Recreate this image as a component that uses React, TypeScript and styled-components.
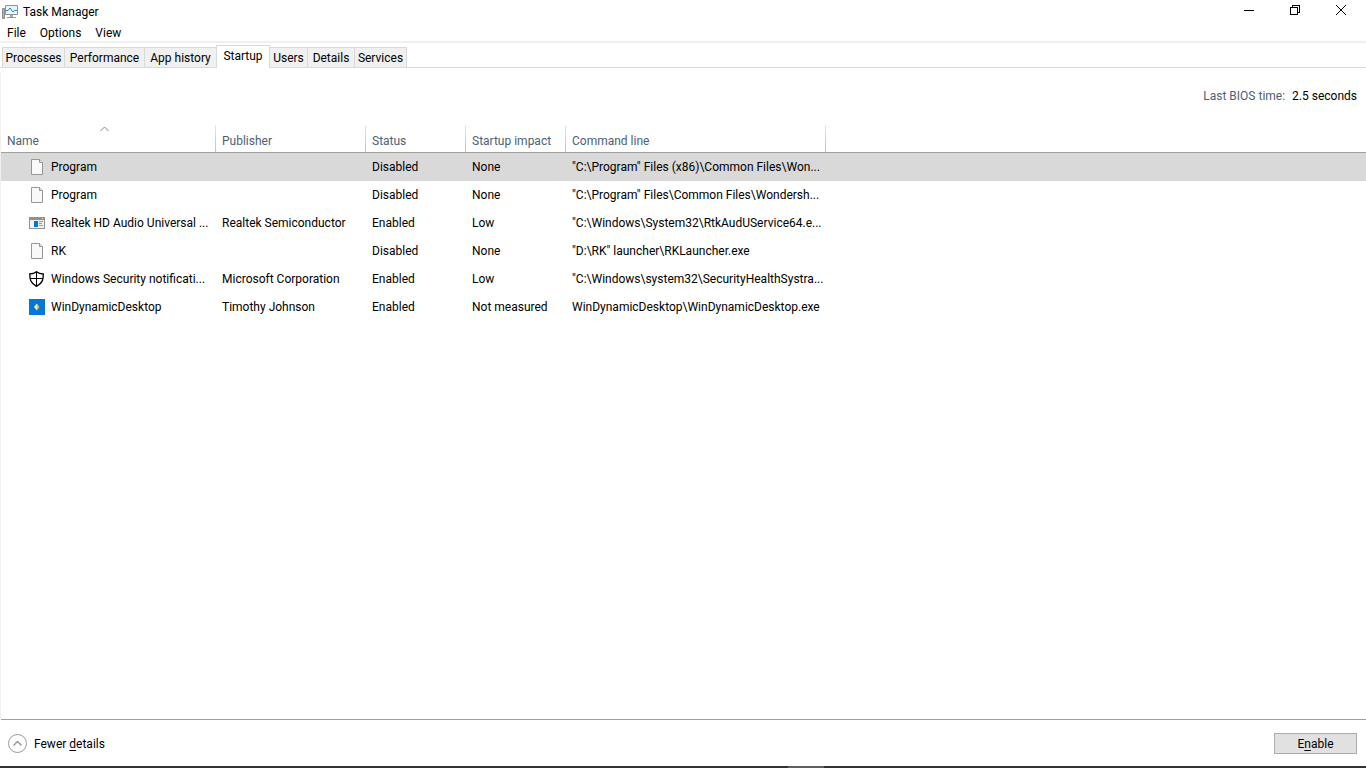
import React from 'react';
import styled, { createGlobalStyle, css } from 'styled-components';

const GlobalStyle = createGlobalStyle`
  *, *::before, *::after { box-sizing: border-box; }
  body {
    margin: 0;
    background: #fff;
    color: #000;
    font: 12px/16px "Segoe UI", Roboto, "Open Sans", sans-serif;
  }
  button { font: inherit; color: inherit; }
  svg { flex: none; }
`;

const Window = styled.div`
  display: flex;
  flex-direction: column;
  min-height: 100vh;
`;

const TitleBar = styled.header`
  display: flex;
  align-items: center;
  height: 24px;
  padding: 0 2px;
`;

const Title = styled.h1`
  flex: 1;
  margin: 0 0 0 5px;
  font-size: 12px;
  font-weight: 400;
`;

const CaptionButton = styled.button`
  display: flex;
  justify-content: center;
  width: 46px;
  height: 22px;
  padding: 4px 0 0;
  border: 0;
  background: none;
`;

const MenuBar = styled.nav`
  display: flex;
  height: 19px;
  gap: 14px;
  padding: 1px 7px;
  border-bottom: 2px solid #f0f0f0;
`;

const MenuItem = styled.button`
  padding: 0;
  border: 0;
  background: none;
`;

const TabBar = styled.div`
  display: flex;
  align-items: flex-end;
  height: 25px;
  padding-left: 2px;
  box-shadow: inset 0 -1px #d9d9d9;
`;

const Tab = styled.button<{ $width: number; $active?: boolean; $first?: boolean; $open?: boolean }>`
  width: ${(p) => p.$width}px;
  height: 21px;
  padding: 0;
  border: solid #d9d9d9;
  border-width: 1px ${(p) => (p.$open ? 0 : 1)}px 1px ${(p) => (p.$first ? 1 : 0)}px;
  background: #f0f0f0;
  white-space: nowrap;
  ${(p) =>
    p.$active &&
    css`
      height: 23px;
      padding-bottom: 2px;
      border-width: 1px 1px 0;
      background: #fff;
    `}
`;

const Panel = styled.main`
  display: flex;
  flex: 1;
  flex-direction: column;
  margin-top: 4px;
  border-left: 1px solid #f0f0f0;
`;

const BiosTime = styled.p`
  display: flex;
  justify-content: flex-end;
  gap: 7px;
  margin: 0;
  padding: 16px 9px 21px;
`;

const BiosLabel = styled.span`
  color: #4c607a;
`;

const StartupTable = styled.table`
  width: 100%;
  border-collapse: separate;
  border-spacing: 0;
  table-layout: fixed;
`;

const Column = styled.col<{ $width?: number }>`
  width: ${(p) => (p.$width ? `${p.$width}px` : 'auto')};
`;

const HeaderCell = styled.th<{ $last?: boolean }>`
  height: 28px;
  padding: 5px 0 0;
  border-bottom: 1px solid #a0a0a0;
  background: ${(p) =>
    p.$last ? 'none' : 'linear-gradient(#e6e6e6, #c0c0c0) right / 1px 100% no-repeat'};
  color: #4c607a;
  font-weight: 400;
  text-align: left;
`;

const SortButton = styled.button`
  position: relative;
  width: 100%;
  padding: 0 6px;
  border: 0;
  background: none;
  text-align: left;
`;

const SortArrow = styled.svg`
  position: absolute;
  top: -7px;
  left: 98px;
`;

const Row = styled.tr<{ $selected?: boolean }>`
  background: ${(p) => (p.$selected ? '#d9d9d9' : 'none')};
`;

const Cell = styled.td`
  height: 28px;
  padding: 0 0 0 6px;
  white-space: nowrap;
`;

const NameContent = styled.div`
  display: flex;
  align-items: center;
  gap: 6px;
  padding-left: 22px;
`;

const Footer = styled.footer`
  display: flex;
  align-items: center;
  justify-content: space-between;
  height: 47px;
  margin-left: 1px;
  padding: 1px 9px 0 6px;
  border-top: 1px solid #a0a0a0;
`;

const DetailsButton = styled.button`
  display: flex;
  align-items: center;
  gap: 7px;
  padding: 0;
  border: 0;
  background: none;
`;

const EnableButton = styled.button`
  width: 83px;
  height: 21px;
  padding: 0;
  border: 1px solid #adadad;
  background: #e1e1e1;
`;

const AccessKey = styled.span`
  text-decoration: underline;
  text-underline-offset: 2px;
`;

const Taskbar = styled.div`
  height: 2px;
  background: linear-gradient(#606060, #606060) 788px 0 / 36px 2px no-repeat #343234;
`;

const AppIcon = () => (
  <svg width="16" height="16" viewBox="0 0 16 16">
    <path d="M.5 4.500h2v10h-2z" fill="#b5b5b5" stroke="#8c8c8c" />
    <path d="M3.500 1.500h12v9h-12z" fill="#e9f6fb" stroke="#8d9297" />
    <path d="M4 6.500h2l2-2.500 3 4 1.500-1.500H15" fill="none" stroke="#2187b8" />
    <path d="M8 11h3v2H8z" fill="#aaa" />
    <path d="M5 13.500h9" stroke="#999" />
  </svg>
);

const FileIcon = () => (
  <svg width="16" height="16" viewBox="0 0 16 16">
    <path d="M2.500.5h8l3 3v12h-11z" fill="#f8f9fa" stroke="#969696" />
    <path d="M10.500.5v3h3" fill="#e8e8e8" stroke="#969696" />
  </svg>
);

const ProgramIcon = () => (
  <svg width="16" height="16" viewBox="0 0 16 16" shapeRendering="crispEdges">
    <path d="M0 2h16v12H0z" fill="#8c9297" />
    <path d="M1 5h14v8H1z" fill="#f2f2f2" />
    <path d="M5 6h4v6H5z" fill="#0078d7" />
    <path d="M10 6h4v1h-4zM10 8h3v1h-3zM10 10h4v1h-4z" fill="#9a9a9a" />
    <path d="M13 3h1v1h-1z" fill="#d5d5d5" />
  </svg>
);

const ShieldIcon = () => (
  <svg width="16" height="16" viewBox="0 0 16 16" fill="none" stroke="#000">
    <path d="M7.500.7C6 2 3.500 3 .8 3c0 5.200.3 9 6.700 12.300C13.900 12 14.300 8.200 14.300 3 11.500 3 9 2 7.500.7z" strokeWidth="1.300" />
    <path d="M7.500 1v14M1 7.500h13" />
  </svg>
);

const DesktopIcon = () => (
  <svg width="16" height="16" viewBox="0 0 16 16">
    <path d="M0 0h16v16H0z" fill="#0078d7" />
    <path d="M8 4.500v7L5 8z" fill="#fff0a0" />
    <path d="M8 4.500v7L10.500 8z" fill="#d9bd62" />
  </svg>
);

type IconKind = 'file' | 'program' | 'shield' | 'desktop';

const icons: Record<IconKind, React.FC> = {
  file: FileIcon,
  program: ProgramIcon,
  shield: ShieldIcon,
  desktop: DesktopIcon,
};

const columns = [
  { label: 'Name', width: 215 },
  { label: 'Publisher', width: 150 },
  { label: 'Status', width: 100 },
  { label: 'Startup impact', width: 100 },
  { label: 'Command line', width: 260 },
];

const apps: { icon: IconKind; name: string; values: string[] }[] = [
  { icon: 'file', name: 'Program', values: ['', 'Disabled', 'None', '"C:\\Program" Files (x86)\\Common Files\\Won...'] },
  { icon: 'file', name: 'Program', values: ['', 'Disabled', 'None', '"C:\\Program" Files\\Common Files\\Wondersh...'] },
  { icon: 'program', name: 'Realtek HD Audio Universal ...', values: ['Realtek Semiconductor', 'Enabled', 'Low', '"C:\\Windows\\System32\\RtkAudUService64.e...'] },
  { icon: 'file', name: 'RK', values: ['', 'Disabled', 'None', '"D:\\RK" launcher\\RKLauncher.exe'] },
  { icon: 'shield', name: 'Windows Security notificati...', values: ['Microsoft Corporation', 'Enabled', 'Low', '"C:\\Windows\\system32\\SecurityHealthSystra...'] },
  { icon: 'desktop', name: 'WinDynamicDesktop', values: ['Timothy Johnson', 'Enabled', 'Not measured', 'WinDynamicDesktop\\WinDynamicDesktop.exe'] },
];

export default function App() {
  return (
    <Window>
      <GlobalStyle />
      <TitleBar>
        <AppIcon />
        <Title>Task Manager</Title>
        <CaptionButton aria-label="Minimize">
          <svg width="10" height="10" stroke="#000" shapeRendering="crispEdges"><path d="M0 5.500h10" /></svg>
        </CaptionButton>
        <CaptionButton aria-label="Restore">
          <svg width="10" height="10" fill="none" stroke="#000" shapeRendering="crispEdges">
            <path d="M.5 2.500h7v7h-7zM2.500 2.500v-2h7v7h-2" />
          </svg>
        </CaptionButton>
        <CaptionButton aria-label="Close">
          <svg width="10" height="10" stroke="#000"><path d="M0 0l10 10M10 0L0 10" /></svg>
        </CaptionButton>
      </TitleBar>
      <MenuBar aria-label="Menu">
        <MenuItem>File</MenuItem>
        <MenuItem>Options</MenuItem>
        <MenuItem>View</MenuItem>
      </MenuBar>
      <TabBar role="tablist">
        <Tab role="tab" $width={63} $first>Processes</Tab>
        <Tab role="tab" $width={80}>Performance</Tab>
        <Tab role="tab" $width={71} $open>App history</Tab>
        <Tab role="tab" $width={54} $active aria-selected>Startup</Tab>
        <Tab role="tab" $width={38}>Users</Tab>
        <Tab role="tab" $width={47}>Details</Tab>
        <Tab role="tab" $width={52}>Services</Tab>
      </TabBar>
      <Panel>
        <BiosTime>
          <BiosLabel>Last BIOS time:</BiosLabel>
          <span>2.5 seconds</span>
        </BiosTime>
        <StartupTable>
          <colgroup>
            {columns.map((c) => <Column key={c.label} $width={c.width} />)}
            <Column />
          </colgroup>
          <thead>
            <tr>
              {columns.map((c, i) => (
                <HeaderCell key={c.label} scope="col">
                  <SortButton>
                    {c.label}
                    {i === 0 && (
                      <SortArrow width="11" height="6" fill="none" stroke="#7c8896">
                        <path d="M1.500 5l4-4 4 4" />
                      </SortArrow>
                    )}
                  </SortButton>
                </HeaderCell>
              ))}
              <HeaderCell as="td" $last />
            </tr>
          </thead>
          <tbody>
            {apps.map((app, i) => {
              const Icon = icons[app.icon];
              return (
                <Row key={i} $selected={i === 0}>
                  <Cell>
                    <NameContent><Icon />{app.name}</NameContent>
                  </Cell>
                  {app.values.map((v, j) => <Cell key={j}>{v}</Cell>)}
                  <Cell />
                </Row>
              );
            })}
          </tbody>
        </StartupTable>
      </Panel>
      <Footer>
        <DetailsButton>
          <svg width="20" height="20" fill="none" stroke="#999">
            <circle cx="10.500" cy="9.500" r="9" />
            <path d="M6.500 11.500l4-4 4 4" strokeWidth="1.500" />
          </svg>
          <span>Fewer <AccessKey>d</AccessKey>etails</span>
        </DetailsButton>
        <EnableButton>E<AccessKey>n</AccessKey>able</EnableButton>
      </Footer>
      <Taskbar />
    </Window>
  );
}
